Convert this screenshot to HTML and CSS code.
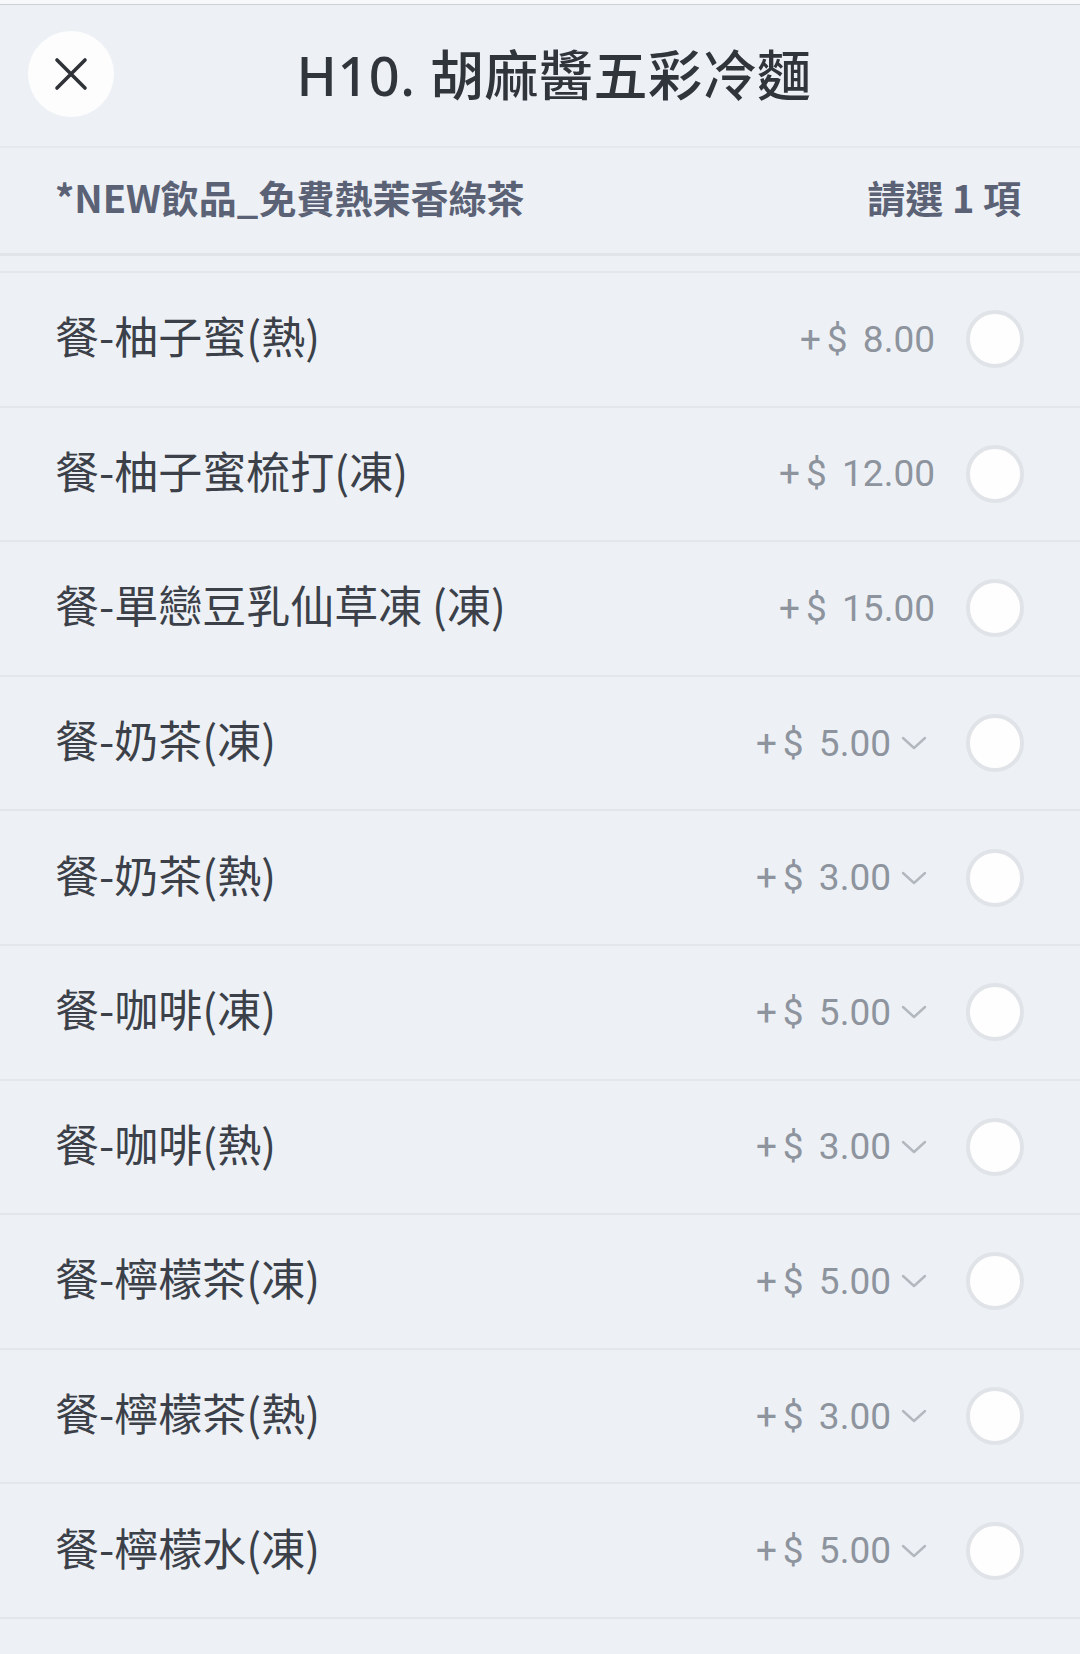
FILE: index.html
```html
<!DOCTYPE html>
<html lang="zh-Hant">

<head>
    <meta charset="UTF-8">
    <meta name="viewport" content="width=device-width, initial-scale=1.0">
    <title>H10. 胡麻醬五彩冷麵</title>
    <link rel="stylesheet" href="styles.css">
</head>

<body>
    <div class="sheet">
        <header class="sheet-header">
            <button class="close-btn" aria-label="close">
                <svg width="34" height="34" viewBox="0 0 34 34">
                    <path d="M3 3 L31 31 M31 3 L3 31" stroke="#2f3338" stroke-width="3.6" stroke-linecap="round" fill="none" />
                </svg>
            </button>
            <h1 class="title">H10. 胡麻醬五彩冷麵</h1>
            <span></span>
        </header>

        <div class="group-head">
            <span class="group-name">*NEW飲品_免費熱茉香綠茶</span>
            <span class="group-rule">請選 1 項</span>
        </div>

        <ul class="options">
            <li class="option">
                <span class="name">餐-柚子蜜(熱)</span>
                <span class="price"><span class="sign">+$</span> 8.00</span>
                <span class="radio"></span>
            </li>
            <li class="option">
                <span class="name">餐-柚子蜜梳打(凍)</span>
                <span class="price"><span class="sign">+$</span> 12.00</span>
                <span class="radio"></span>
            </li>
            <li class="option">
                <span class="name">餐-單戀豆乳仙草凍 (凍)</span>
                <span class="price"><span class="sign">+$</span> 15.00</span>
                <span class="radio"></span>
            </li>
            <li class="option">
                <span class="name">餐-奶茶(凍)</span>
                <span class="price has-more"><span class="sign">+$</span> 5.00<svg class="chev" width="26" height="14" viewBox="0 0 26 14"><path d="M2 2 L13 12 L24 2" /></svg></span>
                <span class="radio"></span>
            </li>
            <li class="option">
                <span class="name">餐-奶茶(熱)</span>
                <span class="price has-more"><span class="sign">+$</span> 3.00<svg class="chev" width="26" height="14" viewBox="0 0 26 14"><path d="M2 2 L13 12 L24 2" /></svg></span>
                <span class="radio"></span>
            </li>
            <li class="option">
                <span class="name">餐-咖啡(凍)</span>
                <span class="price has-more"><span class="sign">+$</span> 5.00<svg class="chev" width="26" height="14" viewBox="0 0 26 14"><path d="M2 2 L13 12 L24 2" /></svg></span>
                <span class="radio"></span>
            </li>
            <li class="option">
                <span class="name">餐-咖啡(熱)</span>
                <span class="price has-more"><span class="sign">+$</span> 3.00<svg class="chev" width="26" height="14" viewBox="0 0 26 14"><path d="M2 2 L13 12 L24 2" /></svg></span>
                <span class="radio"></span>
            </li>
            <li class="option">
                <span class="name">餐-檸檬茶(凍)</span>
                <span class="price has-more"><span class="sign">+$</span> 5.00<svg class="chev" width="26" height="14" viewBox="0 0 26 14"><path d="M2 2 L13 12 L24 2" /></svg></span>
                <span class="radio"></span>
            </li>
            <li class="option">
                <span class="name">餐-檸檬茶(熱)</span>
                <span class="price has-more"><span class="sign">+$</span> 3.00<svg class="chev" width="26" height="14" viewBox="0 0 26 14"><path d="M2 2 L13 12 L24 2" /></svg></span>
                <span class="radio"></span>
            </li>
            <li class="option">
                <span class="name">餐-檸檬水(凍)</span>
                <span class="price has-more"><span class="sign">+$</span> 5.00<svg class="chev" width="26" height="14" viewBox="0 0 26 14"><path d="M2 2 L13 12 L24 2" /></svg></span>
                <span class="radio"></span>
            </li>
        </ul>
    </div>
</body>

</html>
```

FILE: styles.css
```css
body {
    margin: 0;
    padding-top: 4px;
    background-color: #f7f8f9;
    font-family: "Noto Sans CJK TC", "Noto Sans", sans-serif;
    color: #3a3f47;
}

.sheet {
    min-height: 1650px;
    background-color: #edf1f5;
    border-top: 1px solid #cdd0d4;
}

.sheet-header {
    display: grid;
    grid-template-columns: 1fr auto 1fr;
    align-items: center;
    height: 141px;
    padding: 0 26px 0 28px;
    border-bottom: 2px solid #e5e9ed;
}

.close-btn {
    width: 86px;
    height: 86px;
    margin-bottom: 4px;
    border: none;
    border-radius: 50%;
    background-color: #fdfdfe;
    display: flex;
    align-items: center;
    justify-content: center;
    padding: 0;
    cursor: pointer;
}

.title {
    margin: 0 0 6px;
    padding-left: 26px;
    font-family: "Noto Sans", "Noto Sans CJK TC", sans-serif;
    font-size: 54px;
    font-weight: 500;
    color: #30353b;
    letter-spacing: 0.5px;
}

.group-head {
    display: flex;
    justify-content: space-between;
    align-items: center;
    box-sizing: border-box;
    height: 108px;
    padding: 0 59px 8px 55px;
    border-bottom: 3px solid #e1e5e9;
    margin-bottom: 15px;
    font-size: 38px;
    font-weight: 700;
    color: #5b6276;
}

.options {
    list-style: none;
    margin: 0;
    padding: 0;
    border-top: 2px solid #e3e7eb;
}

.option {
    display: flex;
    align-items: center;
    box-sizing: border-box;
    height: 134.6px;
    padding: 0 56px 0 55px;
    border-bottom: 2px solid #e3e7eb;
}

.name {
    flex: 1;
    font-size: 44px;
    color: #3b4049;
    padding-bottom: 8px;
}

.price {
    display: flex;
    align-items: center;
    font-family: Roboto, "Noto Sans", sans-serif;
    font-size: 37px;
    color: #8e949e;
    white-space: pre;
    margin-right: 31px;
}

.price .sign {
    letter-spacing: 6px;
}

.price.has-more {
    margin-right: 39px;
}

.chev {
    margin-left: 10px;
    fill: none;
    stroke: #b3b8bf;
    stroke-width: 2.4;
    stroke-linecap: round;
    stroke-linejoin: round;
}

.radio {
    width: 50px;
    height: 50px;
    border-radius: 50%;
    background-color: #fefefe;
    border: 4px solid #e0e3e7;
    flex-shrink: 0;
}
```
